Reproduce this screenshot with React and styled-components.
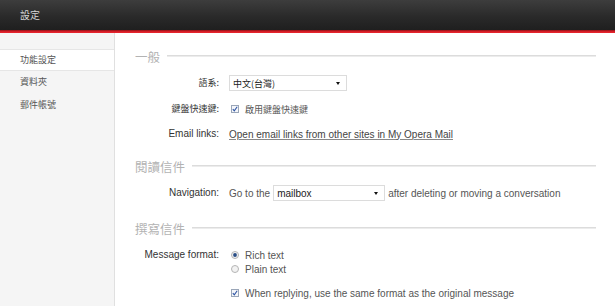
import React from "react";
import styled, { createGlobalStyle } from "styled-components";

const Global = createGlobalStyle`
  html, body { margin: 0; padding: 0; background: #fff; overflow: hidden; }
  body { font-family: "Liberation Sans", "Noto Sans CJK TC", sans-serif; font-size: 10px; color: #444; }
`;

const Page = styled.div`
  width: 615px;
  height: 306px;
  display: flex;
  flex-direction: column;
  overflow: hidden;
`;

const Header = styled.header`
  height: 30px;
  background: linear-gradient(#3d3d3d, #2a2a2a 55%, #1f1f1f);
  color: #d6d6d6;
  font-size: 10px;
  line-height: 30px;
  padding-left: 20px;
  font-family: "Noto Sans CJK TC", sans-serif;
`;

const RedBar = styled.div`
  height: 3px;
  background: linear-gradient(#8e1116, #e0202a 60%, #e8262e);
`;

const Body = styled.div`
  flex: 1;
  display: flex;
`;

const Sidebar = styled.nav`
  width: 115px;
  background: #f5f5f5;
  border-right: 1px solid #e0e0e0;
  padding-top: 16px;
  box-sizing: border-box;
  flex-shrink: 0;
`;

const SideItem = styled.div`
  height: 20px;
  line-height: 20px;
  padding-left: 20px;
  font-size: 9px;
  color: #555;
  font-family: "Noto Sans CJK TC", sans-serif;
  background: ${(p) => (p.$active ? "#fff" : "transparent")};
  border-top: 1px solid ${(p) => (p.$active ? "#e6e6e6" : "transparent")};
  border-bottom: 1px solid ${(p) => (p.$active ? "#e6e6e6" : "transparent")};
  margin-bottom: ${(p) => (p.$active ? "0" : "1px")};
`;

const Main = styled.main`
  flex: 1;
  padding: 0 19px 0 20px;
  display: flex;
  flex-direction: column;
`;

const SectionTitle = styled.div`
  display: flex;
  align-items: center;
  gap: 7px;
  height: 16px;
  margin-top: ${(p) => p.$mt}px;
  font-size: 12.5px;
  color: #b3b3b3;
  font-family: "Noto Sans CJK TC", sans-serif;
  &::after {
    content: "";
    flex: 1;
    height: 1px;
    background: #dcdcdc;
    border-bottom: 1px solid #ececec;
  }
`;

const Row = styled.div`
  display: grid;
  grid-template-columns: 84px 1fr;
  column-gap: 10px;
  align-items: ${(p) => (p.$top ? "start" : "center")};
  min-height: 16px;
  margin-top: ${(p) => p.$mt}px;
`;

const Label = styled.div`
  text-align: right;
  color: #333;
  font-size: ${(p) => (p.$cjk ? "9px" : "10px")};
  line-height: ${(p) => (p.$top ? "14px" : "16px")};
  font-family: ${(p) =>
    p.$cjk ? `"Noto Sans CJK TC", sans-serif` : `"Liberation Sans", sans-serif`};
`;

const Value = styled.div`
  display: flex;
  align-items: center;
  gap: 3px;
  color: #555;
  font-size: 10px;
`;

const Cjk = styled.span`
  font-family: "Noto Sans CJK TC", sans-serif;
  font-size: 9px;
  color: #555;
`;

const Select = styled.div`
  width: ${(p) => p.$w}px;
  height: 16px;
  box-sizing: border-box;
  border: 1px solid #dcdcdc;
  background: #fff;
  display: flex;
  align-items: center;
  justify-content: space-between;
  padding: 0 6px 0 3px;
  color: #222;
  font-size: ${(p) => (p.$cjk ? "9px" : "10px")};
  font-family: ${(p) =>
    p.$cjk ? `"Noto Sans CJK TC", sans-serif` : `"Liberation Sans", sans-serif`};
`;

const Arrow = styled.span`
  width: 0;
  height: 0;
  border-left: 2.5px solid transparent;
  border-right: 2.5px solid transparent;
  border-top: 3px solid #111;
`;

const Link = styled.a`
  color: #444;
  text-decoration: underline;
  text-decoration-color: #888;
  text-underline-offset: 1px;
`;

const Option = styled.label`
  display: flex;
  align-items: center;
  gap: 6px;
  height: 14px;
  margin-left: 2px;
  color: #555;
`;

const Stack = styled.div`
  display: flex;
  flex-direction: column;
`;

const CheckBox = () => (
  <svg width="8" height="8" viewBox="0 0 8 8">
    <rect x="0.5" y="0.5" width="7" height="7" fill="#f4f6fa" stroke="#9aa6b8" />
    <path d="M1.8 4.1 L3.3 5.8 L6.2 1.8" fill="none" stroke="#2f55a4" strokeWidth="1.1" />
  </svg>
);

const Radio = ({ checked }) => (
  <svg width="8" height="8" viewBox="0 0 8 8">
    <circle cx="4" cy="4" r="3.5" fill="#f2f2f2" stroke="#b4b4b4" />
    {checked && <circle cx="4" cy="4" r="1.9" fill="#2a4e86" />}
  </svg>
);

export default function App() {
  return (
    <Page>
      <Global />
      <Header>設定</Header>
      <RedBar />
      <Body>
        <Sidebar>
          <SideItem $active>功能設定</SideItem>
          <SideItem>資料夾</SideItem>
          <SideItem>郵件帳號</SideItem>
        </Sidebar>
        <Main>
          <SectionTitle $mt={15}>一般</SectionTitle>
          <Row $mt={11}>
            <Label $cjk>語系:</Label>
            <Value>
              <Select $w={118} $cjk>
                <span>中文(台灣)</span>
                <Arrow />
              </Select>
            </Value>
          </Row>
          <Row $mt={10}>
            <Label $cjk>鍵盤快速鍵:</Label>
            <Value>
              <Option>
                <CheckBox />
                <Cjk>啟用鍵盤快速鍵</Cjk>
              </Option>
            </Value>
          </Row>
          <Row $mt={9}>
            <Label>Email links:</Label>
            <Value>
              <Link href="#">Open email links from other sites in My Opera Mail</Link>
            </Value>
          </Row>

          <SectionTitle $mt={16}>閱讀信件</SectionTitle>
          <Row $mt={11}>
            <Label>Navigation:</Label>
            <Value>
              <span>Go to the</span>
              <Select $w={112}>
                <span>mailbox</span>
                <Arrow />
              </Select>
              <span>after deleting or moving a conversation</span>
            </Value>
          </Row>

          <SectionTitle $mt={19}>撰寫信件</SectionTitle>
          <Row $mt={12} $top>
            <Label $top>Message format:</Label>
            <Stack>
              <Option>
                <Radio checked />
                <span>Rich text</span>
              </Option>
              <Option>
                <Radio />
                <span>Plain text</span>
              </Option>
            </Stack>
          </Row>
          <Row $mt={9}>
            <span />
            <Option>
              <CheckBox />
              <span>When replying, use the same format as the original message</span>
            </Option>
          </Row>
        </Main>
      </Body>
    </Page>
  );
}
